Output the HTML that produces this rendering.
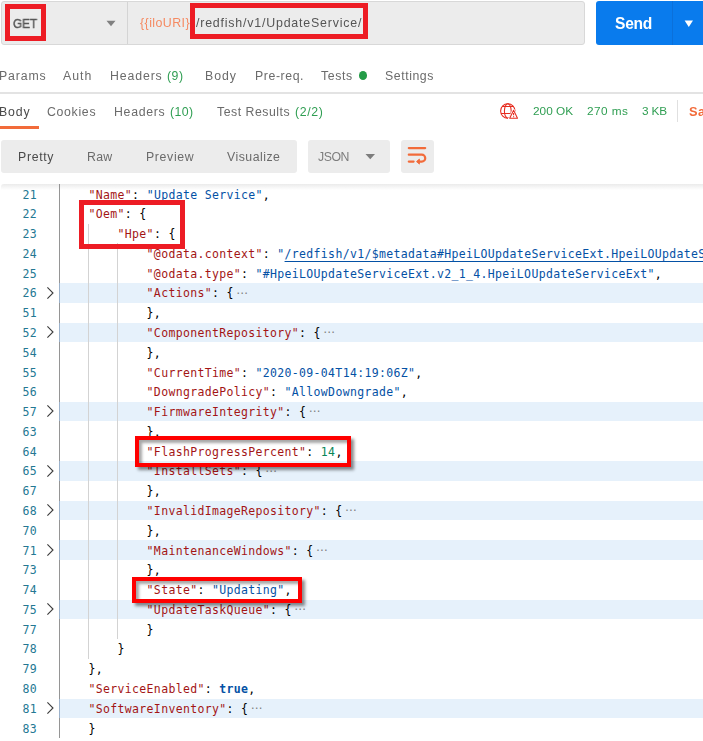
<!DOCTYPE html>
<html lang="en">
<head>
<meta charset="utf-8">
<title>Postman - UpdateService</title>
<style>
html,body{margin:0;padding:0;background:#fff;}
body{width:703px;height:741px;overflow:hidden;position:relative;font-family:"Liberation Sans",Arial,sans-serif;color:#505050;}
.abs{position:absolute;white-space:nowrap;}
.t{will-change:transform;position:absolute;white-space:nowrap;font-size:12.3px;line-height:16px;color:#6b6b6b;}
.g{color:#2f9e52;}
/* URL bar */
#urlbar{position:absolute;left:1px;top:1px;width:582px;height:42px;background:#ececec;border:1px solid #d8d8d8;border-radius:3px;}
#urldiv{position:absolute;left:127px;top:2px;width:1px;height:42px;background:#d4d4d4;}
#send{position:absolute;left:596px;top:1px;width:120px;height:44px;background:#097bed;border-radius:3px;}
#senddiv{position:absolute;left:672px;top:1px;width:1px;height:44px;background:#0b70da;}
.red{z-index:5;position:absolute;border:5px solid #ed1c24;box-sizing:border-box;}
.red2{z-index:5;position:absolute;border:4px solid #ff0000;box-sizing:border-box;box-shadow:3px 3px 3px rgba(0,0,0,.45), inset 3px 3px 3px rgba(0,0,0,.35);}
/* tabs */
#hr1{position:absolute;left:0;top:92px;width:703px;height:2px;background:#e3e3e3;}
#ul1{position:absolute;left:0;top:126px;width:39px;height:3px;background:#f26b3a;}
.pill{position:absolute;background:#ececec;border-radius:3px;top:140px;height:33px;}
/* code */
#shadow{position:absolute;left:1px;top:184px;width:702px;height:6px;background:linear-gradient(#ebebeb,#fff);border-top-left-radius:3px;}
#active{position:absolute;left:58.9px;top:184px;width:1.25px;height:553.8px;background:#959595;}
.aseg{position:absolute;left:58.9px;width:1.25px;background:#9cb2cb;}
.fold{position:absolute;left:59px;width:644px;background:#e6f1fb;}
.guide{position:absolute;width:1px;background:#d3d3d3;}
.ln{position:absolute;left:0;width:37px;text-align:right;font-family:"DejaVu Sans Mono","Liberation Mono",monospace;font-size:11.5px;line-height:19.78px;height:19.78px;color:#237893;white-space:pre;letter-spacing:0.336px;padding-top:1.5px;}
.cl{position:absolute;font-family:"DejaVu Sans Mono","Liberation Mono",monospace;font-size:11.5px;line-height:19.78px;height:19.78px;color:#000;white-space:pre;letter-spacing:0.336px;padding-top:1.5px;}
.chev{position:absolute;}
.k{color:#a31515;}
.s{color:#0451a5;}
.l{color:#0451a5;text-decoration:underline;text-underline-offset:3px;text-decoration-thickness:1px;}
.n{color:#098658;}
.b{color:#0451a5;font-weight:bold;}
.p{color:#000;}
.e{color:#808080;display:inline-block;font-family:"DejaVu Sans","Liberation Sans",sans-serif;font-size:11.8px;line-height:10px;letter-spacing:0;margin-left:2.7px;vertical-align:baseline;position:relative;top:-0.6px;}
</style>
</head>
<body>
<!-- URL bar -->
<div id="urlbar"></div>
<div id="urldiv"></div>
<svg class="abs" style="left:106px;top:20px" width="10" height="7" viewBox="0 0 10 7"><path d="M0.5 0.8 H9.5 L5 6.2 Z" fill="#808080"/></svg>
<div class="red" style="left:5px;top:4px;width:41px;height:37px;"></div>
<div class="red" style="left:190px;top:3px;width:178px;height:35.5px;"></div>
<div id="send"></div>
<div id="senddiv"></div>
<svg class="abs" style="left:684px;top:20px" width="10" height="8" viewBox="0 0 10 8"><path d="M0.6 0.4 H9 L4.8 6.9 Z" fill="#fff"/></svg>

<!-- request tabs -->
<div class="abs" style="left:359px;top:71.3px;width:8.2px;height:8.8px;border-radius:50%;background:#249c47;"></div>
<div id="hr1"></div>

<!-- response tabs -->
<div id="ul1"></div>
<svg class="abs" style="left:499px;top:102px" width="21" height="18" viewBox="0 0 21 18">
 <g fill="none" stroke="#e62b1e" stroke-width="1.05">
  <circle cx="8.8" cy="9" r="7.2"/>
  <ellipse cx="8.8" cy="9" rx="3.4" ry="7.2"/>
  <path d="M3 4.5 H14.6"/>
  <path d="M2 11.5 H15.6"/>
 </g>
 <path d="M14.6 7.4 L19.6 17 H9.6 Z" fill="#fff" stroke="#fff" stroke-width="1.6" stroke-linejoin="round"/>
 <path d="M14.6 8.3 L18.5 16.2 H10.7 Z" fill="none" stroke="#e62b1e" stroke-width="1.05" stroke-linejoin="round"/>
 <path d="M14.6 10.9 V13.3 M14.6 14.3 V15.2" fill="none" stroke="#e62b1e" stroke-width="1.1"/>
</svg>
<div class="abs" style="left:677px;top:100px;width:1px;height:22px;background:#e0e0e0;"></div>

<!-- toolbar -->
<div class="pill" style="left:1px;width:296px;"></div>
<div class="pill" style="left:308px;width:82px;"></div>
<div class="pill" style="left:401px;width:33px;"></div>
<svg class="abs" style="left:365px;top:153px" width="11" height="7" viewBox="0 0 11 7"><path d="M0.5 0.9 H10 L5.25 6.3 Z" fill="#7d7d7d"/></svg>
<svg class="abs" style="left:401px;top:140px" width="33" height="33" viewBox="0 0 33 33">
 <g fill="none" stroke="#f26b3a" stroke-width="2.2" stroke-linecap="round">
  <path d="M7.8 8.1 H24.2"/>
  <path d="M7.8 14.7 H20.8 A3.45 3.45 0 0 1 20.8 21.6 H17.5"/>
  <path d="M7.8 21.6 H12.6"/>
 </g>
 <path d="M15.5 21.6 L18.4 19.1 V24.1 Z" fill="#f26b3a" stroke="#f26b3a" stroke-width="0.9" stroke-linejoin="round"/>
</svg>

<div class="t" id="get" style="left:12.81px;top:15.7px;transform:scaleX(0.9421);transform-origin:0 0;font-size:12.4px;-webkit-text-stroke:0.45px #585858;color:#585858;">GET</div>
<div class="t" id="var" style="left:140.3px;top:15.2px;letter-spacing:0.425px;font-size:12.4px;color:#f58a62;">{{iloURI}}</div>
<div class="t" id="url" style="left:195.6px;top:15.2px;letter-spacing:0.801px;font-size:12.4px;color:#555;">/redfish/v1/UpdateService/</div>
<div class="t" id="sendt" style="left:615.07px;top:15.8px;letter-spacing:-0.25px;font-size:15.6px;font-weight:bold;color:#fff;">Send</div>
<div class="t" id="t_params" style="left:-1.4px;top:67.8px;letter-spacing:0.856px;">Params</div>
<div class="t" id="t_auth" style="left:63.1px;top:67.8px;letter-spacing:1.035px;">Auth</div>
<div class="t" id="t_headers" style="left:109.7px;top:67.8px;letter-spacing:0.88px;">Headers</div>
<div class="t" id="t_h9" style="left:166.9px;top:67.8px;letter-spacing:0.522px;color:#2f9e52;">(9)</div>
<div class="t" id="t_body" style="left:204.9px;top:67.8px;letter-spacing:0.979px;">Body</div>
<div class="t" id="t_prereq" style="left:255.0px;top:67.8px;letter-spacing:0.587px;">Pre-req.</div>
<div class="t" id="t_tests" style="left:321.1px;top:67.8px;letter-spacing:0.62px;">Tests</div>
<div class="t" id="t_settings" style="left:384.91px;top:67.8px;letter-spacing:0.57px;">Settings</div>
<div class="t" id="r_body" style="left:-1.1px;top:103.8px;letter-spacing:0.86px;color:#4a4a4a;">Body</div>
<div class="t" id="r_cookies" style="left:47.14px;top:103.8px;letter-spacing:0.686px;">Cookies</div>
<div class="t" id="r_headers" style="left:113.6px;top:103.8px;letter-spacing:0.705px;">Headers</div>
<div class="t" id="r_h10" style="left:169.9px;top:103.8px;letter-spacing:0.434px;color:#2f9e52;">(10)</div>
<div class="t" id="r_test" style="left:216.8px;top:103.8px;letter-spacing:0.515px;">Test Results</div>
<div class="t" id="r_22" style="left:295.0px;top:103.8px;letter-spacing:0.652px;color:#2f9e52;">(2/2)</div>
<div class="t" id="s_200" style="left:532.98px;top:103.0px;letter-spacing:0.008px;font-size:11.8px;color:#2f9e52;">200 OK</div>
<div class="t" id="s_ms" style="left:586.98px;top:103.0px;letter-spacing:0.421px;font-size:11.8px;color:#2f9e52;">270 ms</div>
<div class="t" id="s_kb" style="left:642.11px;top:103.0px;letter-spacing:-0.14px;font-size:11.8px;color:#2f9e52;">3 KB</div>
<div class="t" id="s_save" style="left:688.77px;top:103.6px;letter-spacing:0.35px;font-size:12.8px;font-weight:bold;color:#f26b3a;">Save Response</div>
<div class="t" id="b_pretty" style="left:17.6px;top:148.8px;letter-spacing:0.676px;color:#4a4a4a;">Pretty</div>
<div class="t" id="b_raw" style="left:87.0px;top:148.8px;letter-spacing:0.265px;">Raw</div>
<div class="t" id="b_preview" style="left:145.6px;top:148.8px;letter-spacing:0.659px;">Preview</div>
<div class="t" id="b_visual" style="left:227.2px;top:148.8px;letter-spacing:0.486px;">Visualize</div>
<div class="t" id="b_json" style="left:317.94px;top:148.8px;letter-spacing:-0.484px;color:#7d7d7d;">JSON</div>
<!-- code -->
<div id="shadow"></div>
<div class="fold" style="top:283.20px;height:19.48px"></div>
<div class="fold" style="top:322.76px;height:19.48px"></div>
<div class="fold" style="top:401.88px;height:19.48px"></div>
<div class="fold" style="top:461.22px;height:19.48px"></div>
<div class="fold" style="top:500.78px;height:19.48px"></div>
<div class="fold" style="top:540.34px;height:19.48px"></div>
<div class="fold" style="top:599.68px;height:19.48px"></div>
<div class="fold" style="top:698.58px;height:19.48px"></div>
<div class="guide" style="left:88.04px;top:223.56px;height:19.78px"></div>
<div class="guide" style="left:88.04px;top:243.34px;height:19.78px"></div>
<div class="guide" style="left:117.08px;top:243.34px;height:19.78px"></div>
<div class="guide" style="left:88.04px;top:263.12px;height:19.78px"></div>
<div class="guide" style="left:117.08px;top:263.12px;height:19.78px"></div>
<div class="guide" style="left:88.04px;top:282.90px;height:19.78px"></div>
<div class="guide" style="left:117.08px;top:282.90px;height:19.78px"></div>
<div class="guide" style="left:88.04px;top:302.68px;height:19.78px"></div>
<div class="guide" style="left:117.08px;top:302.68px;height:19.78px"></div>
<div class="guide" style="left:88.04px;top:322.46px;height:19.78px"></div>
<div class="guide" style="left:117.08px;top:322.46px;height:19.78px"></div>
<div class="guide" style="left:88.04px;top:342.24px;height:19.78px"></div>
<div class="guide" style="left:117.08px;top:342.24px;height:19.78px"></div>
<div class="guide" style="left:88.04px;top:362.02px;height:19.78px"></div>
<div class="guide" style="left:117.08px;top:362.02px;height:19.78px"></div>
<div class="guide" style="left:88.04px;top:381.80px;height:19.78px"></div>
<div class="guide" style="left:117.08px;top:381.80px;height:19.78px"></div>
<div class="guide" style="left:88.04px;top:401.58px;height:19.78px"></div>
<div class="guide" style="left:117.08px;top:401.58px;height:19.78px"></div>
<div class="guide" style="left:88.04px;top:421.36px;height:19.78px"></div>
<div class="guide" style="left:117.08px;top:421.36px;height:19.78px"></div>
<div class="guide" style="left:88.04px;top:441.14px;height:19.78px"></div>
<div class="guide" style="left:117.08px;top:441.14px;height:19.78px"></div>
<div class="guide" style="left:88.04px;top:460.92px;height:19.78px"></div>
<div class="guide" style="left:117.08px;top:460.92px;height:19.78px"></div>
<div class="guide" style="left:88.04px;top:480.70px;height:19.78px"></div>
<div class="guide" style="left:117.08px;top:480.70px;height:19.78px"></div>
<div class="guide" style="left:88.04px;top:500.48px;height:19.78px"></div>
<div class="guide" style="left:117.08px;top:500.48px;height:19.78px"></div>
<div class="guide" style="left:88.04px;top:520.26px;height:19.78px"></div>
<div class="guide" style="left:117.08px;top:520.26px;height:19.78px"></div>
<div class="guide" style="left:88.04px;top:540.04px;height:19.78px"></div>
<div class="guide" style="left:117.08px;top:540.04px;height:19.78px"></div>
<div class="guide" style="left:88.04px;top:559.82px;height:19.78px"></div>
<div class="guide" style="left:117.08px;top:559.82px;height:19.78px"></div>
<div class="guide" style="left:88.04px;top:579.60px;height:19.78px"></div>
<div class="guide" style="left:117.08px;top:579.60px;height:19.78px"></div>
<div class="guide" style="left:88.04px;top:599.38px;height:19.78px"></div>
<div class="guide" style="left:117.08px;top:599.38px;height:19.78px"></div>
<div class="guide" style="left:88.04px;top:619.16px;height:19.78px"></div>
<div class="guide" style="left:117.08px;top:619.16px;height:19.78px"></div>
<div class="guide" style="left:88.04px;top:638.94px;height:19.78px"></div>
<div class="ln" style="top:184.00px">21</div>
<div class="cl" style="top:184.00px;left:88.54px"><span class="k">&quot;Name&quot;</span><span class="p">: </span><span class="s">&quot;Update Service&quot;</span><span class="p">,</span></div>
<div class="ln" style="top:203.78px">22</div>
<div class="cl" style="top:203.78px;left:88.54px"><span class="k">&quot;Oem&quot;</span><span class="p">: {</span></div>
<div class="ln" style="top:223.56px">23</div>
<div class="cl" style="top:223.56px;left:117.58px"><span class="k">&quot;Hpe&quot;</span><span class="p">: {</span></div>
<div class="ln" style="top:243.34px">24</div>
<div class="cl" style="top:243.34px;left:146.62px"><span class="k">&quot;@odata.context&quot;</span><span class="p">: </span><span class="s">&quot;</span><span class="l">/redfish/v1/$metadata#HpeiLOUpdateServiceExt.HpeiLOUpdateServiceExt</span><span class="s">&quot;</span><span class="p">,</span></div>
<div class="ln" style="top:263.12px">25</div>
<div class="cl" style="top:263.12px;left:146.62px"><span class="k">&quot;@odata.type&quot;</span><span class="p">: </span><span class="s">&quot;#HpeiLOUpdateServiceExt.v2_1_4.HpeiLOUpdateServiceExt&quot;</span><span class="p">,</span></div>
<div class="ln" style="top:282.90px">26</div>
<svg class="chev" style="left:45px;top:284.79px" width="12" height="16" viewBox="0 0 12 16"><path d="M2.4 2.3 L8 8 L2.4 13.7" fill="none" stroke="#3c3c3c" stroke-width="1.1"/></svg>
<div class="cl" style="top:282.90px;left:146.62px"><span class="k">&quot;Actions&quot;</span><span class="p">: {</span><span class="e">⋯</span></div>
<div class="ln" style="top:302.68px">51</div>
<div class="cl" style="top:302.68px;left:146.62px"><span class="p">},</span></div>
<div class="ln" style="top:322.46px">52</div>
<svg class="chev" style="left:45px;top:324.35px" width="12" height="16" viewBox="0 0 12 16"><path d="M2.4 2.3 L8 8 L2.4 13.7" fill="none" stroke="#3c3c3c" stroke-width="1.1"/></svg>
<div class="cl" style="top:322.46px;left:146.62px"><span class="k">&quot;ComponentRepository&quot;</span><span class="p">: {</span><span class="e">⋯</span></div>
<div class="ln" style="top:342.24px">54</div>
<div class="cl" style="top:342.24px;left:146.62px"><span class="p">},</span></div>
<div class="ln" style="top:362.02px">55</div>
<div class="cl" style="top:362.02px;left:146.62px"><span class="k">&quot;CurrentTime&quot;</span><span class="p">: </span><span class="s">&quot;2020-09-04T14:19:06Z&quot;</span><span class="p">,</span></div>
<div class="ln" style="top:381.80px">56</div>
<div class="cl" style="top:381.80px;left:146.62px"><span class="k">&quot;DowngradePolicy&quot;</span><span class="p">: </span><span class="s">&quot;AllowDowngrade&quot;</span><span class="p">,</span></div>
<div class="ln" style="top:401.58px">57</div>
<svg class="chev" style="left:45px;top:403.47px" width="12" height="16" viewBox="0 0 12 16"><path d="M2.4 2.3 L8 8 L2.4 13.7" fill="none" stroke="#3c3c3c" stroke-width="1.1"/></svg>
<div class="cl" style="top:401.58px;left:146.62px"><span class="k">&quot;FirmwareIntegrity&quot;</span><span class="p">: {</span><span class="e">⋯</span></div>
<div class="ln" style="top:421.36px">63</div>
<div class="cl" style="top:421.36px;left:146.62px"><span class="p">},</span></div>
<div class="ln" style="top:441.14px">64</div>
<div class="cl" style="top:441.14px;left:146.62px"><span class="k">&quot;FlashProgressPercent&quot;</span><span class="p">: </span><span class="n">14</span><span class="p">,</span></div>
<div class="ln" style="top:460.92px">65</div>
<svg class="chev" style="left:45px;top:462.81px" width="12" height="16" viewBox="0 0 12 16"><path d="M2.4 2.3 L8 8 L2.4 13.7" fill="none" stroke="#3c3c3c" stroke-width="1.1"/></svg>
<div class="cl" style="top:460.92px;left:146.62px"><span class="k">&quot;InstallSets&quot;</span><span class="p">: {</span><span class="e">⋯</span></div>
<div class="ln" style="top:480.70px">67</div>
<div class="cl" style="top:480.70px;left:146.62px"><span class="p">},</span></div>
<div class="ln" style="top:500.48px">68</div>
<svg class="chev" style="left:45px;top:502.37px" width="12" height="16" viewBox="0 0 12 16"><path d="M2.4 2.3 L8 8 L2.4 13.7" fill="none" stroke="#3c3c3c" stroke-width="1.1"/></svg>
<div class="cl" style="top:500.48px;left:146.62px"><span class="k">&quot;InvalidImageRepository&quot;</span><span class="p">: {</span><span class="e">⋯</span></div>
<div class="ln" style="top:520.26px">70</div>
<div class="cl" style="top:520.26px;left:146.62px"><span class="p">},</span></div>
<div class="ln" style="top:540.04px">71</div>
<svg class="chev" style="left:45px;top:541.93px" width="12" height="16" viewBox="0 0 12 16"><path d="M2.4 2.3 L8 8 L2.4 13.7" fill="none" stroke="#3c3c3c" stroke-width="1.1"/></svg>
<div class="cl" style="top:540.04px;left:146.62px"><span class="k">&quot;MaintenanceWindows&quot;</span><span class="p">: {</span><span class="e">⋯</span></div>
<div class="ln" style="top:559.82px">73</div>
<div class="cl" style="top:559.82px;left:146.62px"><span class="p">},</span></div>
<div class="ln" style="top:579.60px">74</div>
<div class="cl" style="top:579.60px;left:146.62px"><span class="k">&quot;State&quot;</span><span class="p">: </span><span class="s">&quot;Updating&quot;</span><span class="p">,</span></div>
<div class="ln" style="top:599.38px">75</div>
<svg class="chev" style="left:45px;top:601.27px" width="12" height="16" viewBox="0 0 12 16"><path d="M2.4 2.3 L8 8 L2.4 13.7" fill="none" stroke="#3c3c3c" stroke-width="1.1"/></svg>
<div class="cl" style="top:599.38px;left:146.62px"><span class="k">&quot;UpdateTaskQueue&quot;</span><span class="p">: {</span><span class="e">⋯</span></div>
<div class="ln" style="top:619.16px">77</div>
<div class="cl" style="top:619.16px;left:146.62px"><span class="p">}</span></div>
<div class="ln" style="top:638.94px">78</div>
<div class="cl" style="top:638.94px;left:117.58px"><span class="p">}</span></div>
<div class="ln" style="top:658.72px">79</div>
<div class="cl" style="top:658.72px;left:88.54px"><span class="p">},</span></div>
<div class="ln" style="top:678.50px">80</div>
<div class="cl" style="top:678.50px;left:88.54px"><span class="k">&quot;ServiceEnabled&quot;</span><span class="p">: </span><span class="b">true</span><span class="p">,</span></div>
<div class="ln" style="top:698.28px">81</div>
<svg class="chev" style="left:45px;top:700.17px" width="12" height="16" viewBox="0 0 12 16"><path d="M2.4 2.3 L8 8 L2.4 13.7" fill="none" stroke="#3c3c3c" stroke-width="1.1"/></svg>
<div class="cl" style="top:698.28px;left:88.54px"><span class="k">&quot;SoftwareInventory&quot;</span><span class="p">: {</span><span class="e">⋯</span></div>
<div class="ln" style="top:718.06px">83</div>
<div class="cl" style="top:718.06px;left:88.54px"><span class="p">}</span></div>
<div id="active"></div>
<div class="aseg" style="top:283.20px;height:19.48px"></div>
<div class="aseg" style="top:322.76px;height:19.48px"></div>
<div class="aseg" style="top:401.88px;height:19.48px"></div>
<div class="aseg" style="top:461.22px;height:19.48px"></div>
<div class="aseg" style="top:500.78px;height:19.48px"></div>
<div class="aseg" style="top:540.34px;height:19.48px"></div>
<div class="aseg" style="top:599.68px;height:19.48px"></div>
<div class="aseg" style="top:698.58px;height:19.48px"></div>
<div class="red" style="left:79px;top:200px;width:105.5px;height:48.7px;"></div>
<div class="red2" style="left:135px;top:436px;width:216px;height:31.4px;"></div>
<div class="red2" style="left:132px;top:577px;width:170px;height:25.6px;"></div>
</body>
</html>
